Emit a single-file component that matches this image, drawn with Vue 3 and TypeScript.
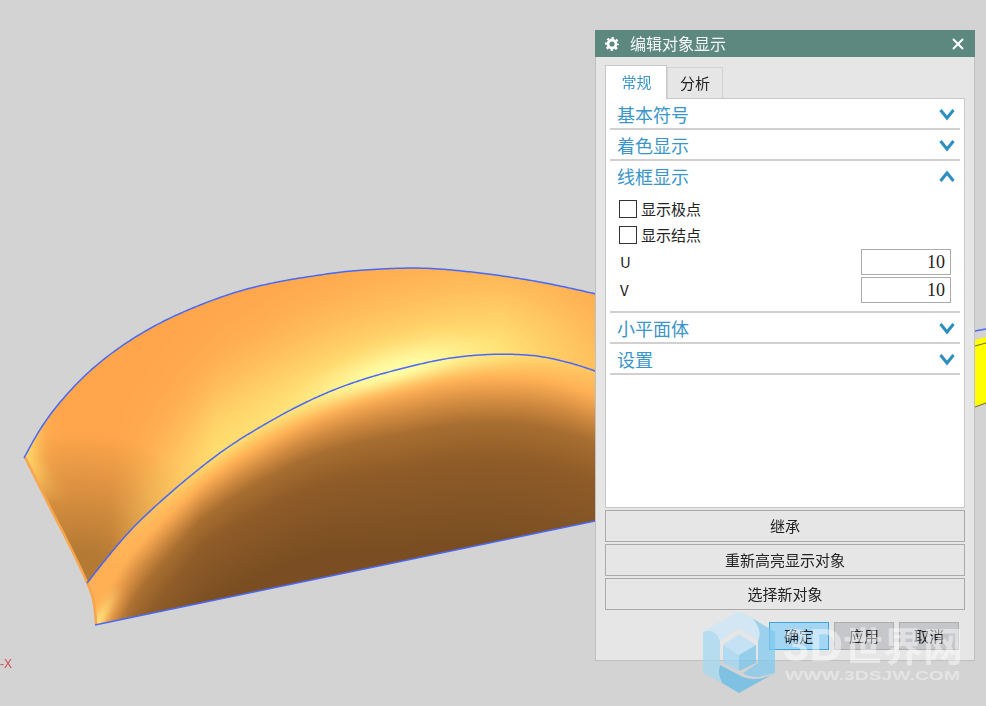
<script setup lang="ts">
import { onMounted, ref } from 'vue'

type P = [number, number]
type C = [number, number, number]

const surface = ref<HTMLCanvasElement | null>(null)

// traced from the shot, x -> y
const topEdge: P[] = [[4, 497], [24, 458], [40, 428], [60, 402], [83, 377], [113, 352], [147, 330], [183, 312], [233, 293], [277, 282], [320, 275], [350, 271], [420, 268], [480, 273], [540, 282], [596, 294], [640, 305]]
const midLine: P[] = [[24, 660], [60, 618], [87, 583], [117, 545], [133, 527], [177, 487], [225, 449], [267, 423], [300, 405], [333, 390], [367, 378], [400, 369], [443, 359], [477, 355], [507, 354], [540, 356], [567, 362], [596, 371], [640, 390]]
// y -> x
const leftEdge: P[] = [[458, 24], [510, 50], [543, 67], [583, 86], [600, 92], [625, 95]]

function curve(pts: P[], x: number): number {
  if (x <= pts[0][0]) return pts[0][1]
  const last = pts.length - 1
  if (x >= pts[last][0]) return pts[last][1]
  let i = 0
  while (pts[i + 1][0] < x) i++
  const a = pts[Math.max(i - 1, 0)]
  const b = pts[i]
  const c = pts[i + 1]
  const d = pts[Math.min(i + 2, last)]
  const h = c[0] - b[0]
  const t = (x - b[0]) / h
  const m1 = ((c[1] - a[1]) / (c[0] - a[0])) * h
  const m2 = ((d[1] - b[1]) / (d[0] - b[0])) * h
  return (2 * t ** 3 - 3 * t ** 2 + 1) * b[1] + (t ** 3 - 2 * t ** 2 + t) * m1 + (3 * t ** 2 - 2 * t ** 3) * c[1] + (t ** 3 - t ** 2) * m2
}

// the hand traced points wobble, so run a box blur over the sampled curve
function smoothed(pts: P[], radius: number): (x: number) => number {
  let ys: number[] = []
  for (let x = 0; x <= 640; x++) ys.push(curve(pts, x))
  for (let pass = 0; pass < 3; pass++) {
    ys = ys.map((_, i) => {
      let sum = 0
      let n = 0
      for (let j = Math.max(0, i - radius); j <= Math.min(640, i + radius); j++) {
        sum += ys[j]
        n++
      }
      return sum / n
    })
  }
  return (x) => {
    const i = Math.min(639, Math.max(0, Math.floor(x)))
    return ys[i] + (ys[i + 1] - ys[i]) * (x - i)
  }
}

const topY = smoothed(topEdge, 9)
const midY = smoothed(midLine, 12)
const botY = (x: number) => 625 - (x - 95) * 0.208
const clamp = (v: number) => Math.min(1, Math.max(0, v))
const gauss = (v: number, w: number) => Math.exp(-((v / w) ** 2))
const mix = (a: C, b: C, t: number): C => [a[0] + (b[0] - a[0]) * t, a[1] + (b[1] - a[1]) * t, a[2] + (b[2] - a[2]) * t]

function table(pts: P[], x: number): number {
  if (x <= pts[0][0]) return pts[0][1]
  for (let i = 1; i < pts.length; i++) {
    if (x <= pts[i][0]) {
      const t = (x - pts[i - 1][0]) / (pts[i][0] - pts[i - 1][0])
      return pts[i - 1][1] + (pts[i][1] - pts[i - 1][1]) * t
    }
  }
  return pts[pts.length - 1][1]
}

const glow: P[] = [[110, 0], [215, 1], [500, 1], [600, 0.45]]
const falloff: P[] = [[95, 1.6], [130, 1.1], [200, 0.8], [300, 0.85], [400, 1], [600, 1.1]]

const ORANGE: C = [255, 166, 76]
const SHADOW: C = [180, 122, 52]
const YELLOW: C = [255, 220, 110]
const PALE: C = [255, 253, 166]
const SOFT: C = [255, 176, 85]
const ramp: [number, C][] = [[22, SOFT], [45, [208, 138, 64]], [65, [168, 110, 48]], [100, [143, 92, 40]], [180, [122, 78, 34]]]

function shade(x: number, y: number): C {
  const mid = midY(x)
  const a = table(glow, x)
  const b = gauss(x - 395, 85)
  if (y < mid) {
    const d = mid - y
    let c = mix(ORANGE, SHADOW, clamp(1.12 - (Math.hypot(x - 80, y - 585) - 20) / 120))
    const dx = x - 24 - Math.max(0, y - 458) * 0.49
    c = mix(c, [255, 212, 102], gauss(dx, 16) * clamp(1 - (y - 458) / 45))
    c = mix(c, YELLOW, gauss(d, 75) * a)
    return mix(c, PALE, gauss(d, 22) * b)
  }
  const d = y - mid
  const s = d / table(falloff, x)
  let c = mix(SOFT, YELLOW, a)
  let from = 0
  let start = c
  for (const [stop, col] of ramp) {
    if (s <= stop) {
      c = mix(start, col, (s - from) / (stop - from))
      break
    }
    from = stop
    start = col
    c = col
  }
  c = mix(c, PALE, gauss(d, 14) * b)
  const along = (x - 97) * 0.49 + (622 - y) * 0.87
  const perp = (x - 97) * 0.87 + (y - 622) * 0.49
  c = mix(c, [255, 168, 80], gauss(perp, 18) * clamp(1 - along / 70) * 0.6)
  return mix(c, [255, 224, 122], gauss(perp, 7) * clamp(1 - along / 42))
}

function drawSurface(ctx: CanvasRenderingContext2D) {
  const w = ctx.canvas.width
  const h = ctx.canvas.height
  const img = ctx.createImageData(w, h)
  for (let y = 260; y < h; y++) {
    for (let x = 20; x < w; x++) {
      const c = shade(x, y)
      const i = (y * w + x) * 4
      img.data[i] = c[0]
      img.data[i + 1] = c[1]
      img.data[i + 2] = c[2]
      img.data[i + 3] = 255
    }
  }
  ctx.putImageData(img, 0, 0)

  const top = new Path2D()
  top.moveTo(24, topY(24))
  for (let x = 26; x <= w; x += 2) top.lineTo(x, topY(x))
  const left = new Path2D()
  left.moveTo(24, topY(24))
  for (let y = 460; y <= 625; y += 3) left.lineTo(curve(leftEdge, y), y)
  const whole = new Path2D(top)
  whole.lineTo(w, botY(w))
  whole.lineTo(95, 625)
  for (let y = 622; y >= 458; y -= 3) whole.lineTo(curve(leftEdge, y), y)
  whole.closePath()

  ctx.globalCompositeOperation = 'destination-in'
  ctx.fill(whole)
  ctx.globalCompositeOperation = 'source-atop'
  ctx.strokeStyle = '#f8a54c'
  ctx.lineWidth = 5
  ctx.stroke(left)
  ctx.globalCompositeOperation = 'source-over'

  const mid = new Path2D()
  mid.moveTo(87, midY(87))
  for (let x = 89; x <= w; x += 2) mid.lineTo(x, midY(x))
  const bot = new Path2D()
  bot.moveTo(95, 625)
  bot.lineTo(w, botY(w))

  ctx.strokeStyle = '#4a68f5'
  ctx.lineWidth = 1.5
  ctx.stroke(top)
  ctx.stroke(mid)
  ctx.stroke(bot)
}

onMounted(() => {
  const ctx = surface.value?.getContext('2d')
  if (ctx) drawSurface(ctx)
})

const sections = [
  { title: '基本符号', open: false },
  { title: '着色显示', open: false },
  { title: '线框显示', open: true },
  { title: '小平面体', open: false },
  { title: '设置', open: false },
]
const actions = ['继承', '重新高亮显示对象', '选择新对象']
const footer = ['确定', '应用', '取消']
</script>

<template>
  <div class="viewport">
    <canvas ref="surface" class="surface" width="600" height="640"></canvas>

    <svg class="scene" width="986" height="706" viewBox="0 0 986 706">
      <path d="M975 331L986 329" stroke="#4a68f5" stroke-width="1.5" />
      <path d="M975 340L986 337V403L975 407Z" fill="#ffff00" />
      <path d="M975 346L986 343M975 407L986 403" stroke="#6b6b30" stroke-width="1" />
      <text x="0" y="668" class="axis">-X</text>
    </svg>

    <section class="dialog">
      <header class="titlebar">
        <svg class="gear" width="16" height="16" viewBox="0 0 16 16">
          <circle cx="8" cy="8" r="4" fill="none" stroke="#fff" stroke-width="2.8" />
          <circle cx="8" cy="8" r="6" fill="none" stroke="#fff" stroke-width="2" stroke-dasharray="2.4 2.31" stroke-dashoffset="1.2" />
        </svg>
        <span class="title">编辑对象显示</span>
        <svg class="close" width="12" height="12" viewBox="0 0 12 12">
          <path d="M1 1L11 11M11 1L1 11" stroke="#fff" stroke-width="2" />
        </svg>
      </header>

      <div class="body">
        <div class="tabs">
          <div class="tab active">常规</div>
          <div class="tab">分析</div>
        </div>

        <div class="panel">
          <div v-for="s in sections" :key="s.title" class="section">
            <div class="head" :class="{ plain: s.open }">
              <span>{{ s.title }}</span>
              <svg width="16" height="13" viewBox="0 0 16 13">
                <path :d="s.open ? 'M1.5 11L8 3L14.5 11' : 'M1.5 2L8 10L14.5 2'" fill="none" stroke="#2d8fc0" stroke-width="3" />
              </svg>
            </div>
            <div v-if="s.open" class="content">
              <label class="check"><input type="checkbox" />显示极点</label>
              <label class="check"><input type="checkbox" />显示结点</label>
              <div class="field first"><span>U</span><input type="text" value="10" /></div>
              <div class="field"><span>V</span><input type="text" value="10" /></div>
            </div>
          </div>
        </div>

        <button v-for="a in actions" :key="a" class="wide">{{ a }}</button>

        <div class="footer">
          <button v-for="(f, i) in footer" :key="f" class="small" :class="{ primary: i === 0 }">{{ f }}</button>
        </div>
      </div>
    </section>

    <svg class="mark" width="270" height="90" viewBox="700 610 270 90">
      <g opacity="0.74">
        <path d="M703 632L739 611L752 618Q763 630 758 641L739 628L720 641Q715 627 703 632Z" fill="#cbe7f7" />
        <path d="M752 618L775 632V673L758 677Q748 677 743 673L758 663V641Q763 630 752 618Z" fill="#80c9ee" />
        <path d="M720 665L739 675Q755 684 775 673L739 693L722 683Q717 673 720 665Z" fill="#62bbe8" />
        <path d="M703 632Q715 627 720 641V665Q717 673 722 683L703 673Z" fill="#a5d8f3" />
        <path d="M739 634L756 645L739 655L723 645Z" fill="#b8e0f7" />
        <path d="M723 645L739 655V671L723 663Z" fill="#a0d5f3" />
        <path d="M756 645V663L739 671V655Z" fill="#78c5ec" />
      </g>
      <text x="783" y="661" class="mark-big"><tspan class="mark-latin">3D</tspan>世界网</text>
      <text x="785" y="680" class="mark-small" textLength="175" lengthAdjust="spacingAndGlyphs">WWW.3DSJW.COM</text>
    </svg>
  </div>
</template>

<style>
html,
body {
  margin: 0;
  background: #d3d3d3;
}
</style>

<style scoped>
.viewport {
  position: relative;
  width: 986px;
  height: 706px;
  overflow: hidden;
  background: #d3d3d3;
  font-family: "Noto Sans CJK SC", "Liberation Sans", sans-serif;
}

.surface,
.scene {
  position: absolute;
  top: 0;
  left: 0;
}

.axis {
  font: 12px "Liberation Sans", sans-serif;
  fill: #cf4a4a;
}

.dialog {
  position: absolute;
  top: 30px;
  left: 595px;
  width: 380px;
  height: 631px;
  box-sizing: border-box;
  display: flex;
  flex-direction: column;
  background: #e6e6e6;
  border: 1px solid #c0c0c0;
  border-top: 0;
}

.titlebar {
  height: 27px;
  margin: 0 -1px;
  flex: none;
  display: flex;
  align-items: center;
  padding: 0 11px 0 9px;
  background: #5c8880;
  color: #f4f7f6;
}

.title {
  margin-left: 10px;
  font-size: 16px;
  line-height: 27px;
}

.close {
  margin-left: auto;
}

.body {
  flex: 1;
  display: flex;
  flex-direction: column;
  padding: 8px 9px 0;
}

.tabs {
  display: flex;
  align-items: flex-end;
  height: 34px;
  margin-bottom: -1px;
  position: relative;
  z-index: 1;
}

.tab {
  box-sizing: border-box;
  width: 56px;
  height: 31px;
  margin-bottom: 1px;
  border: 1px solid #d2d2d2;
  border-bottom: 0;
  font-size: 15px;
  line-height: 30px;
  text-align: center;
  color: #222;
}

.tab.active {
  width: 62px;
  height: 34px;
  margin-bottom: 0;
  padding-left: 1px;
  line-height: 32px;
  background: #fff;
  border-color: #c8c8c8;
  color: #3a96c8;
}

.panel {
  box-sizing: border-box;
  height: 410px;
  flex: none;
  background: #fff;
  border: 1px solid #c8c8c8;
  padding: 0 4px;
}

.head {
  box-sizing: border-box;
  height: 31px;
  display: flex;
  align-items: center;
  justify-content: space-between;
  padding: 1px 5px 0 7px;
  border-bottom: 2px solid #d0d0d0;
  font-size: 18px;
  color: #3a96c8;
}

.head.plain {
  border-bottom-color: transparent;
}

.content {
  display: flex;
  flex-direction: column;
  padding: 8px 9px 8px;
  border-bottom: 2px solid #d0d0d0;
  font-size: 15px;
  color: #222;
}

.check {
  height: 18px;
  margin-bottom: 8px;
  display: flex;
  align-items: center;
  gap: 4px;
  line-height: 18px;
}

.check input {
  appearance: none;
  box-sizing: border-box;
  width: 18px;
  height: 18px;
  margin: 0;
  background: #fff;
  border: 1px solid #333;
  border-radius: 0;
}

.field {
  height: 26px;
  margin-top: 2px;
  display: flex;
  align-items: center;
  justify-content: space-between;
  padding-left: 1px;
}

.field span {
  margin-top: -2px;
}

.field.first {
  margin-top: -3px;
}

.field input {
  box-sizing: border-box;
  width: 90px;
  height: 26px;
  padding: 1px 5px 0 0;
  border: 1px solid #aaa;
  border-radius: 0;
  outline: 0;
  background: #fff;
  text-align: right;
  font: 18px "Liberation Serif", serif;
  color: #222;
}

button {
  font-family: inherit;
  font-size: 15px;
  color: #222;
  padding: 0 0 2px;
  border-radius: 0;
  cursor: default;
}

.wide {
  flex: none;
  height: 32px;
  margin-top: 2px;
  background: #e6e6e6;
  border: 1px solid #aaa;
}

.footer {
  display: flex;
  justify-content: flex-end;
  gap: 5px;
  margin-top: 12px;
  padding-right: 6px;
}

.small {
  width: 60px;
  height: 28px;
  background: #c6c7cb;
  border: 1px solid #adadad;
}

.small.primary {
  background: #a2d6f3;
  border-color: #3ea4e2;
}

.mark {
  position: absolute;
  top: 610px;
  left: 700px;
  pointer-events: none;
}

.mark-big {
  font: 700 40px "Noto Sans CJK SC", sans-serif;
  fill: rgba(255, 255, 255, 0.45);
}

.mark-latin {
  font: 700 47px "Liberation Sans", sans-serif;
}

.mark-small {
  font: 700 12px "Liberation Sans", sans-serif;
  fill: rgba(255, 255, 255, 0.4);
}
</style>
